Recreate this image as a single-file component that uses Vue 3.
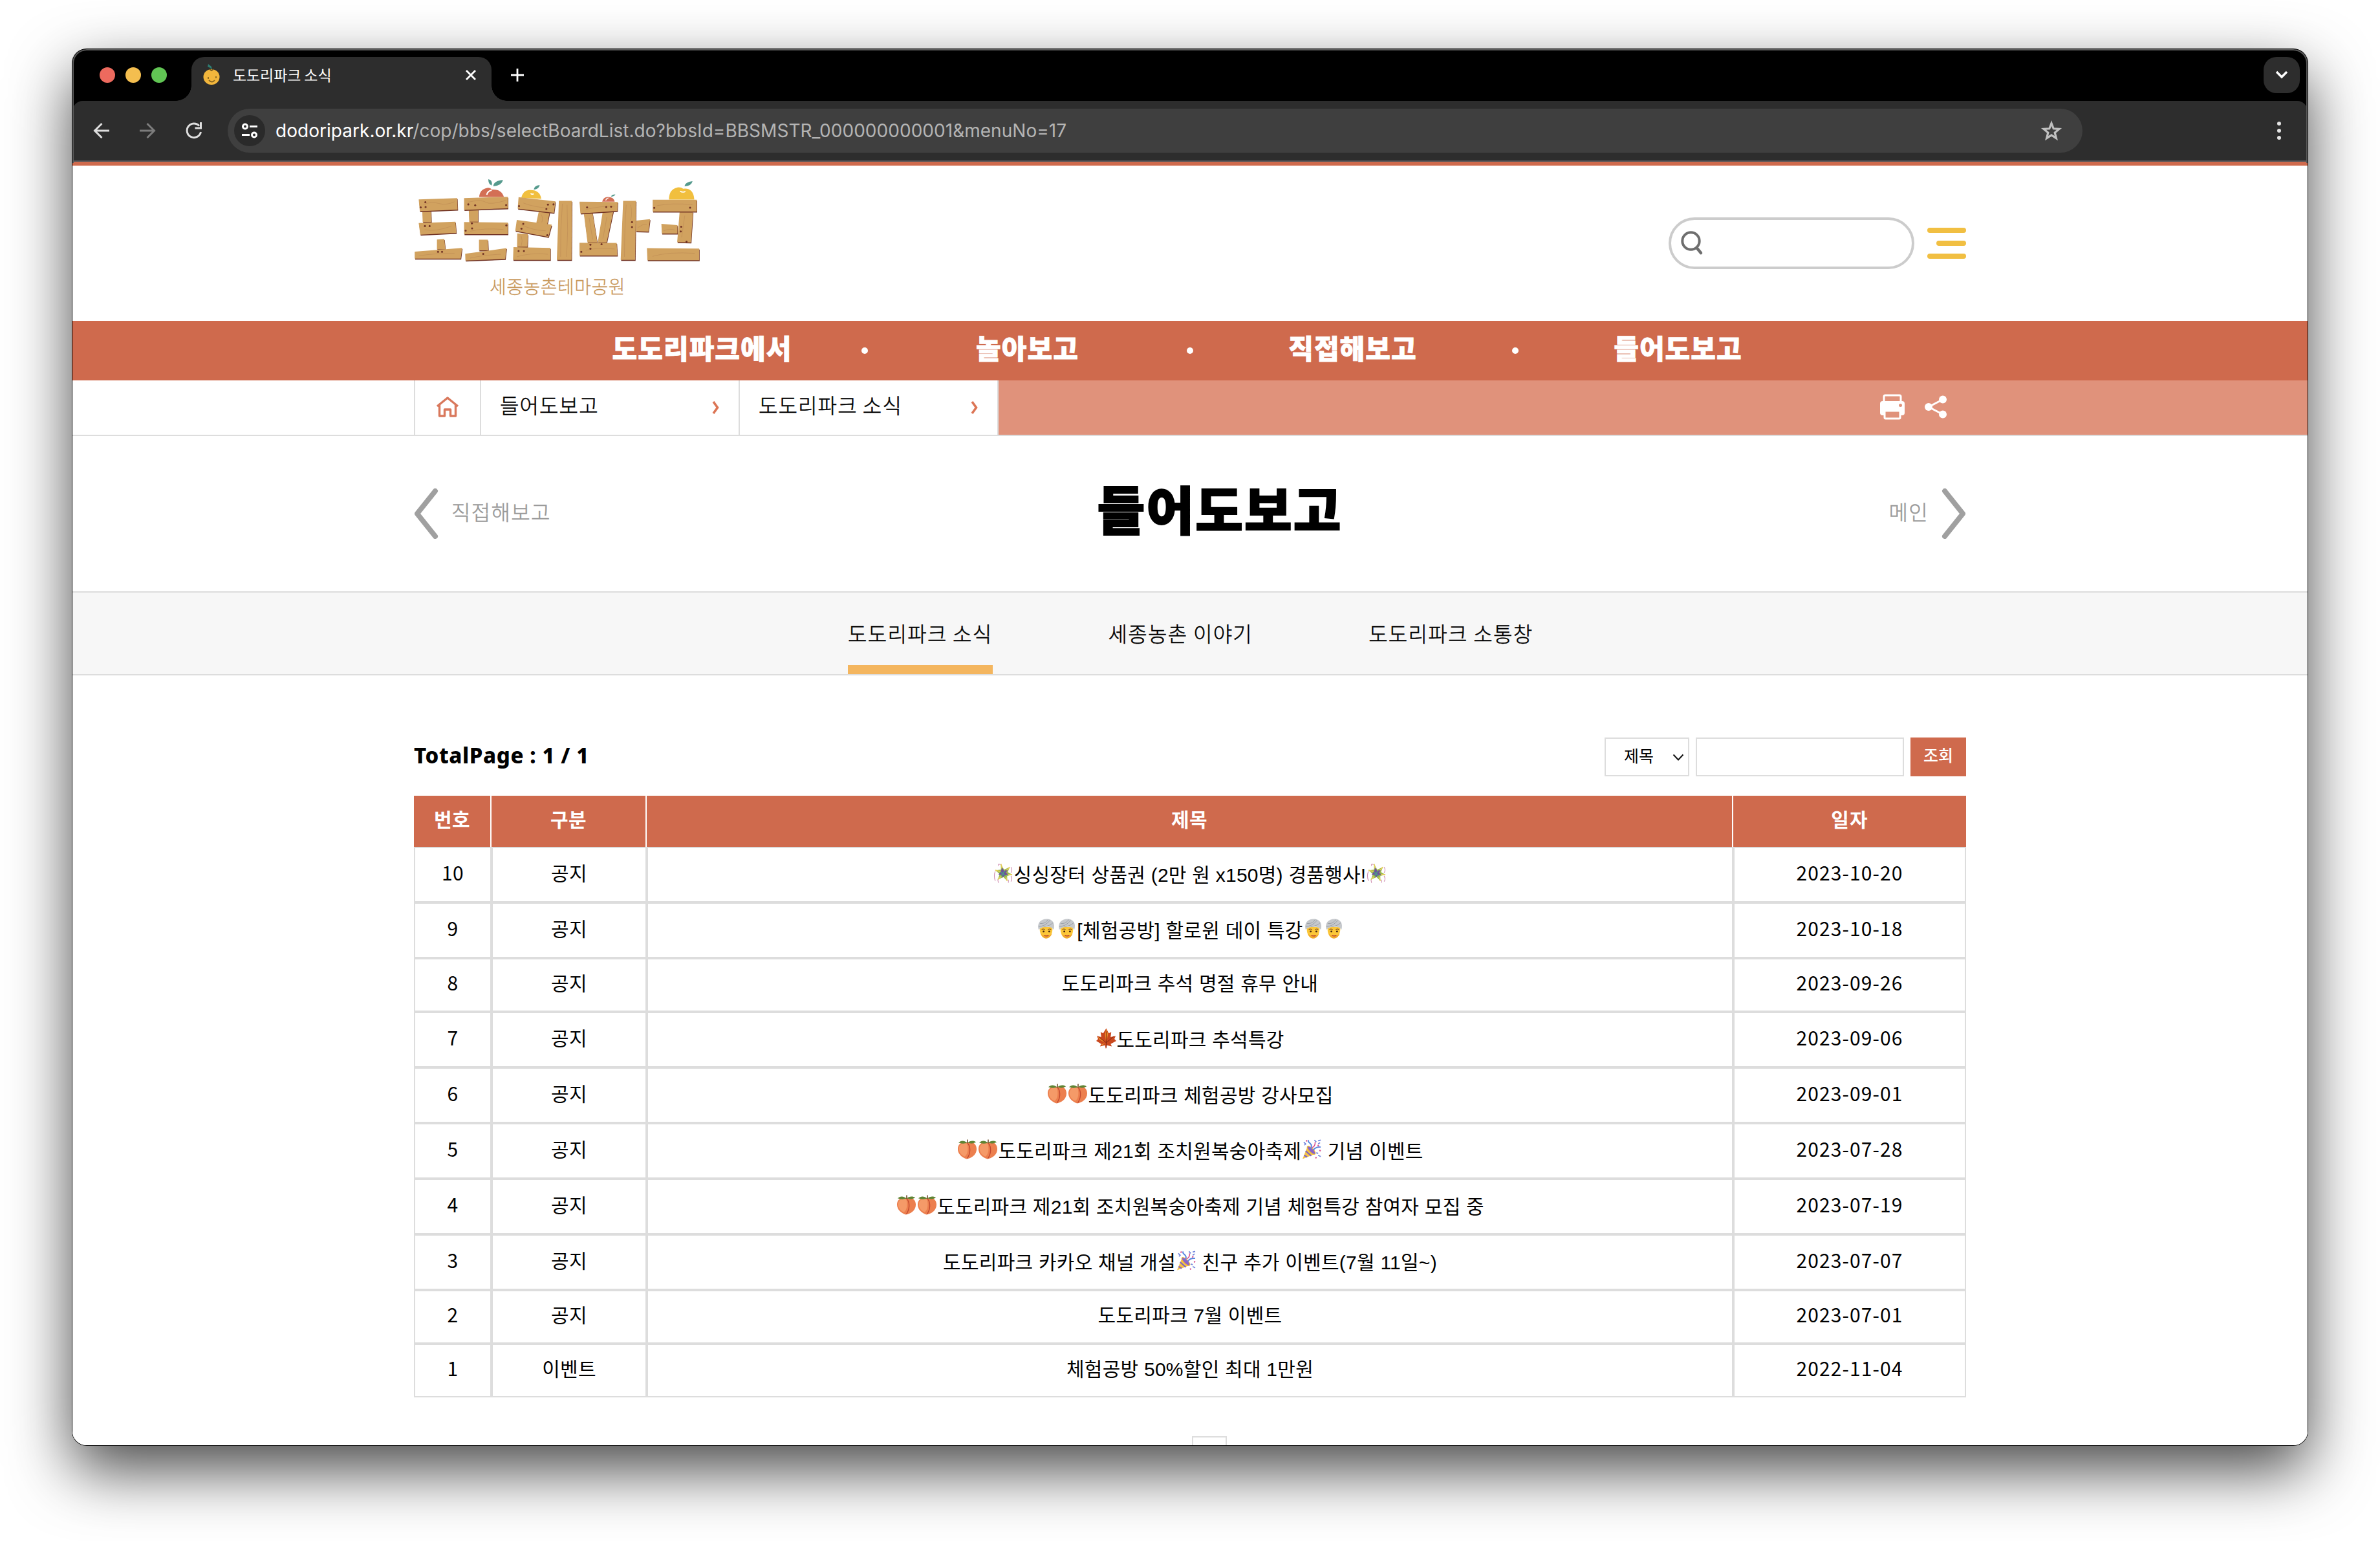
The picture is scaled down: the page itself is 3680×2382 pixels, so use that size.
<script setup>
const navItems = ['도도리파크에서', '놀아보고', '직접해보고', '들어도보고']
const crumbs = ['들어도보고', '도도리파크 소식']
const subTabs = ['도도리파크 소식', '세종농촌 이야기', '도도리파크 소통창']

const rows = [
  { no: 10, kind: '공지', title: ':pinata:싱싱장터 상품권 (2만 원 x150명) 경품행사!:pinata:', date: '2023-10-20' },
  { no: 9, kind: '공지', title: ':turban::turban:[체험공방] 할로윈 데이 특강:turban::turban:', date: '2023-10-18' },
  { no: 8, kind: '공지', title: '도도리파크 추석 명절 휴무 안내', date: '2023-09-26' },
  { no: 7, kind: '공지', title: ':maple:도도리파크 추석특강', date: '2023-09-06' },
  { no: 6, kind: '공지', title: ':peach::peach:도도리파크 체험공방 강사모집', date: '2023-09-01' },
  { no: 5, kind: '공지', title: ':peach::peach:도도리파크 제21회 조치원복숭아축제:popper: 기념 이벤트', date: '2023-07-28' },
  { no: 4, kind: '공지', title: ':peach::peach:도도리파크 제21회 조치원복숭아축제 기념 체험특강 참여자 모집 중', date: '2023-07-19' },
  { no: 3, kind: '공지', title: '도도리파크 카카오 채널 개설:popper: 친구 추가 이벤트(7월 11일~)', date: '2023-07-07' },
  { no: 2, kind: '공지', title: '도도리파크 7월 이벤트', date: '2023-07-01' },
  { no: 1, kind: '이벤트', title: '체험공방 50%할인 최대 1만원', date: '2022-11-04' },
].map((r) => {
  const parts = r.title
    .split(/(:[a-z]+:)/)
    .filter(Boolean)
    .map((t) => (/^:[a-z]+:$/.test(t) ? { icon: t.slice(1, -1) } : { text: t }))
  return { ...r, parts, tall: parts.some((p) => p.icon) }
})

// Wooden planks of the logo lettering
const planks = [
  '155,255 194,255 196,310 157,310',
  '139,205 312,199 314,252 144,260',
  '139,314 304,308 308,360 146,368',
  '221,390 254,388 259,436 221,436',
  '121,446 334,429 328,478 121,478',
  '364,250 406,250 406,308 366,308',
  '343,199 540,193 540,246 343,254',
  '343,310 540,312 540,366 343,366',
  '410,391 450,391 452,440 410,440',
  '348,456 534,430 528,480 349,487',
  '680,255 728,262 716,325 668,312',
  '588,195 754,214 747,267 584,248',
  '580,300 737,322 722,378 573,350',
  '582,362 630,366 628,424 581,424',
  '565,425 731,429 731,484 563,484',
  '769,212 828,212 826,484 760,484',
  '881,268 920,266 942,404 898,404',
  '966,264 1014,260 984,404 944,404',
  '862,216 1034,217 1032,258 866,270',
  '862,405 1029,406 1032,464 862,464',
  '1058,212 1116,212 1112,484 1047,484',
  '1116,303 1179,296 1172,354 1116,352',
  '1312,262 1372,262 1363,404 1301,402',
  '1191,207 1389,207 1389,261 1191,261',
  '1230,318 1302,324 1302,363 1232,363',
  '1165,430 1400,432 1400,486 1167,486',
]
const nails = [
  [169, 218], [148, 242], [170, 240], [167, 328], [188, 328], [226, 447], [244, 447],
  [362, 228], [393, 232], [532, 231], [378, 316], [379, 339], [350, 349], [533, 325], [429, 457],
  [590, 236], [720, 229], [745, 228], [713, 249], [609, 318], [601, 340], [717, 370], [588, 443], [612, 443],
  [896, 242], [982, 240], [1004, 239], [911, 414], [911, 433], [961, 412], [870, 447],
  [1098, 310], [1098, 333], [1198, 244], [1359, 243], [1319, 331], [1317, 353], [1343, 400],
]
const grains = [
  'M160 228q40-14 70-4t70-8', 'M165 345q50 10 120-16', 'M140 466q60-12 160-12',
  'M360 218q60-14 80 0t90-8', 'M370 352q60-16 150-8', 'M370 476q60-14 140-18',
  'M610 222q50 20 120 24', 'M600 322q50 26 110 28', 'M580 470q60-20 140-12',
  'M785 225q-10 120-8 245', 'M806 230q6 120-2 240', 'M890 252q60-16 130-16', 'M890 440q50-14 130-6',
  'M1072 230q-8 110-8 240', 'M1092 230q8 40 0 70', 'M905 290q10 60 16 100', 'M985 285q-10 60-18 100',
  'M1210 234q70-14 160-4', 'M1335 280q-8 60-14 100', 'M1190 468q70-22 190-14', 'M1125 335q20-16 40-16',
  'M690 275q10 20 2 36', 'M600 375q8 20 0 44', 'M1240 350q30-12 50-4',
]
</script>

<template>
  <svg class="defs" width="0" height="0" aria-hidden="true">
    <symbol id="peach" viewBox="0 0 32 32">
      <path d="M17 5C9 2 1 6 1 15c0 9 8 14 14 16 7-1 16-6 16-16C31 6 23 2 17 5z" fill="#ec7f4e" />
      <path d="M3 13C4 6 12 4 16 7c2 8 1 17-4 20-6-2-10-8-9-14z" fill="#f59a68" />
      <path d="M17 6c5 6 4 17-1 24" fill="none" stroke="#c2492f" stroke-width="1.4" />
      <path d="M16 5C11 1 6 1 2 5c5 2 10 2 14 0zM17 5c3-3 9-4 13-1-4 2-9 3-13 1z" fill="#5f8434" />
      <path d="M16.500 6V0" stroke="#6b4a26" stroke-width="1.600" />
    </symbol>
    <symbol id="turban" viewBox="0 0 32 32">
      <path d="M6 13c-1 10 3 18 10 18s11-8 10-18z" fill="#fbc638" />
      <path d="M8 24c2 5 5 7 8 7s7-2 9-7c-4 3-12 4-17 0z" fill="#f0a62c" />
      <path d="M4 17C1 7 7 0 17 0s14 8 11 17C24 11 11 11 4 17z" fill="#c5c8cc" />
      <path d="M4 12c7 0 14-4 18-10M6 7c5 1 10-1 13-6M12 12c7 0 12-3 15-6" fill="none" stroke="#989da3" stroke-width="1" />
      <path d="M9 17q2-2 5 0M19 17q3-2 5 0" fill="none" stroke="#7d4b18" stroke-width="1.200" />
      <circle cx="12" cy="20" r="1.500" fill="#432510" />
      <circle cx="21" cy="20" r="1.500" fill="#432510" />
      <path d="M13 26q4 2 7 0" fill="none" stroke="#c04a32" stroke-width="1.800" />
    </symbol>
    <symbol id="maple" viewBox="0 0 32 32">
      <path d="M16 0l4 8 4-2-1 8 8-2-2 5 3 3-9 5 2 4-8-2-1 5h-1l-1-5-8 2 2-4-8-5 3-3-2-5 7 2-1-8 4 2z" fill="#c9481e" />
      <path d="M16 1l3 8-3 14-2-13zM2 13l6 4 6 6-9-5zM8 26l6-3-4 4z" fill="#ea8a2a" />
      <path d="M16 5v26M16 23l12-10M16 23L4 14" stroke="#7c2410" stroke-width=".9" fill="none" />
    </symbol>
    <symbol id="popper" viewBox="0 0 32 32">
      <path d="M1 31L9 11l12 12z" fill="#f5c445" />
      <path d="M3.500 25l5 3M6 18l9 8" stroke="#7e62c4" stroke-width="2.200" />
      <ellipse cx="15" cy="17" rx="3.200" ry="8.600" transform="rotate(-45 15 17)" fill="#8a63c9" stroke="#f0b938" stroke-width="1.200" />
      <path d="M14 15q3-6-1-9t-2-5M18 17q4-6 12-5" fill="none" stroke="#5a86df" stroke-width="2" />
      <path d="M16 13q6-3 5-9" fill="none" stroke="#d8508e" stroke-width="1.600" />
      <path d="M3 4l3 3-2 2M20 1l3 3M26 2l4-1M26 7l3-2M26 25l4 2M23 21l3 1" fill="none" stroke="#7286dc" stroke-width="1.800" />
      <path d="M7 1l1 2M28 17l2 1M22 28l1 2M25 9l2 1" stroke="#d8508e" stroke-width="2.200" />
    </symbol>
    <symbol id="pinata" viewBox="0 0 32 32">
      <path d="M12 1l5 9 9-4-3 8 7 4-8 2 0 8-6-6-9 4 3-9-7-6 9-1z" fill="#9bbb4e" />
      <path d="M14 6l3 6 6-2-3 5 4 3-6 1-3 4-2-5-5 0 4-5z" fill="#6f5299" />
      <path d="M12 1l2 7M26 6l-5 5M3 11l8 2M30 18l-7 0M22 28l-2-6M7 26l5-5" stroke="#e4cf59" stroke-width="1.800" />
      <path d="M3 13q-3 6 0 15M28 20q3 5 0 9M11 2q-4-2-3 2M28 6q3 5 0 9M7 26l1 5M24 26l0 5" fill="none" stroke="#cf8db0" stroke-width="1.100" />
      <path d="M12 14l7 6M18 12l-5 8" stroke="#4a9c86" stroke-width="1.600" />
    </symbol>
  </svg>

  <div class="window">
    <header class="tabstrip">
      <div class="lights"><i class="red"></i><i class="amber"></i><i class="green"></i></div>
      <div class="tab">
        <svg class="favicon" width="26" height="34" viewBox="0 0 26 34">
          <path d="M8 1l5 4 1 5-3-3-4-2z" fill="#2d7d72" />
          <ellipse cx="13" cy="21" rx="12.5" ry="12" fill="#f2b63c" />
          <path d="M10 9l3 2 3-2" fill="none" stroke="#7a5a1c" stroke-width="2" />
          <path d="M8 21v3M20 20v3M9 26q5 5 9 0" fill="none" stroke="#8a661f" stroke-width="1.8" />
        </svg>
        <span class="tab-title">도도리파크 소식</span>
        <svg width="18" height="18" viewBox="0 0 18 18"><path d="M2 2l14 14M16 2L2 16" stroke="#fff" stroke-width="2.8" /></svg>
      </div>
      <svg class="plus" width="20" height="20" viewBox="0 0 20 20"><path d="M10 0v20M0 10h20" stroke="#fff" stroke-width="2.8" /></svg>
      <div class="tab-menu">
        <svg width="20" height="14" viewBox="0 0 20 14"><path d="M2 2l8 8 8-8" fill="none" stroke="#fff" stroke-width="3.4" /></svg>
      </div>
    </header>

    <div class="toolbar">
      <svg class="back" width="26" height="26" viewBox="0 0 26 26"><path d="M25 13H3M13.500 2L2.500 13l11 11" fill="none" stroke="#dedede" stroke-width="3" /></svg>
      <svg class="fwd" width="26" height="26" viewBox="0 0 26 26"><path d="M1 13h22M12.500 2l11 11-11 11" fill="none" stroke="#7c7c7c" stroke-width="3" /></svg>
      <svg class="reload" width="28" height="28" viewBox="0 0 28 28">
        <path d="M24.500 16A10.800 10.800 0 1 1 22 6.600" fill="none" stroke="#dedede" stroke-width="3" />
        <path d="M26 1v10.500H15.500v-3H23V1z" fill="#dedede" />
      </svg>
      <div class="omnibox">
        <div class="site-info">
          <svg width="26" height="24" viewBox="0 0 26 24" fill="none" stroke="#fff" stroke-width="3">
            <circle cx="6" cy="5.500" r="3.500" /><path d="M13 5.500h12M1 18.500h12" /><circle cx="20" cy="18.500" r="3.500" />
          </svg>
        </div>
        <span class="url"><b>dodoripark.or.kr</b>/cop/bbs/selectBoardList.do?bbsId=BBSMSTR_000000000001&amp;menuNo=17</span>
        <svg class="star" width="34" height="32" viewBox="0 0 34 32"><path d="M17 4.500l3.200 8.300 8.800.6-6.800 5.600 2.200 8.700-7.400-4.800-7.400 4.800 2.200-8.700L5 13.400l8.800-.6z" fill="none" stroke="#c0c0c0" stroke-width="3.200" /></svg>
      </div>
      <div class="kebab"><i></i><i></i><i></i></div>
    </div>

    <main class="page">
      <div class="masthead">
        <div class="brand">
          <svg class="logo" width="454" height="134" viewBox="100 100 1320 400" preserveAspectRatio="none">
            <g fill="#d36f55"><path d="M411 194q2-36 36-42 14-2 20 8 44-4 55 34z" /><path d="M964 216q4-20 22-22 30-2 34 22z" /></g>
            <path d="M445 184q4-18 22-21" fill="none" stroke="#fff" stroke-width="6" />
            <path d="M980 210q2-10 12-11" fill="none" stroke="#fff" stroke-width="4" />
            <g fill="#f1bf3e"><path d="M600 198q8-34 34-36 50-4 56 40z" /><path d="M1264 206q0-48 38-56 16-2 26 6 46-6 50 50z" /></g>
            <path d="M642 178q6 6 14 1M1314 167q12 8 24 2" fill="none" stroke="#fff" stroke-width="5" />
            <g fill="#559a8d">
              <path d="M474 145q2-26 44-29-6 26-44 29z" /><path d="M452 112q22 6 15 29-16-6-15-29z" />
              <path d="M656 160q2-18 27-21-4 20-27 21z" /><path d="M1003 192q4-10 20-10-4 10-20 10z" />
              <path d="M1334 145q2-20 36-24-4 22-36 24z" />
            </g>
            <g v-for="(p, i) in planks" :key="i">
              <polygon :points="p" fill="#713325" transform="translate(2 4.500)" />
              <polygon :points="p" fill="#d1a25f" />
            </g>
            <path :d="grains.join('')" fill="none" stroke="#bd8a54" stroke-width="1.800" />
            <g fill="#713325"><circle v-for="(n, i) in nails" :key="i" :cx="n[0]" :cy="n[1]" r="4.500" /></g>
          </svg>
          <p class="tagline">세종농촌테마공원</p>
        </div>
        <div class="tools">
          <div class="search">
            <svg width="36" height="38" viewBox="0 0 36 38" fill="none" stroke="#6e6e6e"><circle cx="15.500" cy="15.500" r="13.200" stroke-width="4" /><path d="M24.500 26l6.500 8" stroke-width="4.500" stroke-linecap="round" /></svg>
          </div>
          <div class="burger"><i></i><i></i><i></i></div>
        </div>
      </div>

      <nav class="gnb"><span v-for="n in navItems" :key="n">{{ n }}</span></nav>

      <div class="crumb-bar">
        <div class="crumb-left"></div>
        <div class="crumb-home">
          <svg width="36" height="32" viewBox="0 0 36 32" fill="none" stroke="#d9785c" stroke-width="3.400" stroke-linejoin="round"><path d="M2 15L18 2l16 13M5.500 13v17h8V20h9v10h8V13" /></svg>
        </div>
        <div v-for="c in crumbs" :key="c" class="crumb">
          <span>{{ c }}</span>
          <svg width="12" height="20" viewBox="0 0 12 20"><path d="M2 1l6.500 9L2 19" fill="none" stroke="#dc7555" stroke-width="3.600" /></svg>
        </div>
        <div class="crumb-rest">
          <svg width="40" height="40" viewBox="0 0 40 40">
            <rect x="7" y="2" width="26" height="16" rx="2" fill="none" stroke="#fff" stroke-width="3" />
            <path d="M5 11h30q4 0 4 4v14q0 4-4 4H5q-4 0-4-4V15q0-4 4-4z" fill="#fff" />
            <rect x="8" y="26" width="24" height="12" rx="1.500" fill="#e0927b" stroke="#fff" stroke-width="3" />
            <circle cx="32.500" cy="17.500" r="2.500" fill="#e0927b" />
          </svg>
          <svg width="36" height="36" viewBox="0 0 36 36" fill="#fff"><path d="M29 6.500L7 18l22 11.500" fill="none" stroke="#fff" stroke-width="3" /><circle cx="29" cy="6.500" r="6" /><circle cx="7" cy="18" r="6" /><circle cx="29" cy="29.500" r="6" /></svg>
        </div>
      </div>

      <section class="heading">
        <a class="side prev"><svg width="38" height="78" viewBox="0 0 38 78"><path d="M33 4L5 39l28 35" /></svg><span>직접해보고</span></a>
        <h1>들어도보고</h1>
        <a class="side next"><span>메인</span><svg width="38" height="78" viewBox="0 0 38 78"><path d="M5 4l28 35L5 74" /></svg></a>
      </section>

      <div class="subnav"><a v-for="(t, i) in subTabs" :key="t" :class="{ on: i === 0 }">{{ t }}</a></div>

      <section class="board">
        <div class="board-top">
          <strong>TotalPage : 1 / 1</strong>
          <div class="filter">
            <div class="select"><span>제목</span><svg width="18" height="12" viewBox="0 0 18 12"><path d="M1.500 1.500L9 9.500l7.500-8" fill="none" stroke="#111" stroke-width="2" /></svg></div>
            <div class="field"></div>
            <div class="go">조회</div>
          </div>
        </div>
        <div class="table">
          <div class="tr th"><div>번호</div><div>구분</div><div>제목</div><div>일자</div></div>
          <div v-for="r in rows" :key="r.no" class="tr" :class="{ tall: r.tall }">
            <div>{{ r.no }}</div>
            <div>{{ r.kind }}</div>
            <div class="subject">
              <template v-for="(p, i) in r.parts" :key="i"><svg v-if="p.icon" class="emoji" width="31" height="32"><use :href="'#' + p.icon" /></svg><span v-else>{{ p.text }}</span></template>
            </div>
            <div>{{ r.date }}</div>
          </div>
        </div>
        <div class="pager"><i></i></div>
      </section>
    </main>
  </div>
</template>

<style>
body {
  background: #fff;
}
#app {
  width: 3680px;
  height: 2382px;
  overflow: hidden;
  display: flex;
  justify-content: center;
  align-items: flex-start;
}
</style>

<style scoped>
* {
  box-sizing: border-box;
}
svg {
  display: block;
  flex: none;
}
.defs {
  position: absolute;
}
.window {
  position: relative;
  width: 3456px;
  height: 2158px;
  margin-top: 76px;
  border-radius: 22px;
  overflow: hidden;
  background: linear-gradient(#000 0 120px, #fff 120px);
  font-family: 'Noto Sans CJK KR', 'Noto Sans', sans-serif;
  color: #000;
  display: flex;
  flex-direction: column;
  box-shadow: 0 0 0 1px #000, 0 38px 96px rgba(0, 0, 0, 0.72);
}
.window::after {
  content: '';
  position: absolute;
  inset: 0 0 auto;
  height: 174px;
  border-radius: 22px 22px 0 0;
  border: solid #5c5c5c;
  border-width: 2px 2px 0;
}

/* browser chrome */
.tabstrip {
  height: 80px;
  flex: none;
  background: #000;
  display: flex;
  align-items: center;
}
.lights {
  display: flex;
  gap: 16px;
  margin-left: 42px;
  width: 142px;
}
.lights i {
  width: 24px;
  height: 24px;
  border-radius: 50%;
}
.red { background: #ed6a5e; }
.amber { background: #f4be4f; }
.green { background: #61c554; }
.tab {
  position: relative;
  width: 464px;
  height: 68px;
  align-self: flex-end;
  background: #2d2d2d;
  border-radius: 20px 20px 0 0;
  display: flex;
  align-items: center;
  padding: 0 23px 12px 18px;
}
.tab::before,
.tab::after {
  content: '';
  position: absolute;
  bottom: 0;
  width: 24px;
  height: 24px;
}
.tab::before {
  right: 100%;
  background: radial-gradient(circle at 0 0, transparent 23.5px, #2d2d2d 24px);
}
.tab::after {
  left: 100%;
  background: radial-gradient(circle at 100% 0, transparent 23.5px, #2d2d2d 24px);
}
.tab-title {
  flex: 1;
  margin: -3px 0 0 20px;
  font-size: 23px;
  line-height: 30px;
  letter-spacing: -0.1px;
  color: #fff;
}
.favicon {
  margin-top: -2px;
}
.plus {
  margin-left: 30px;
}
.tab-menu {
  width: 56px;
  height: 56px;
  border-radius: 20px;
  background: #2d2d2d;
  margin-left: auto;
  margin-right: 12px;
  display: grid;
  place-items: center;
}
.toolbar {
  height: 94px;
  flex: none;
  background: #2d2d2d;
  border-bottom: 2px solid #55565a;
  border-radius: 16px 16px 0 0;
  display: flex;
  align-items: center;
}
.back { margin-left: 32px; }
.fwd { margin-left: 45px; }
.reload { margin-left: 45px; }
.omnibox {
  margin-left: 38px;
  width: 2868px;
  height: 68px;
  border-radius: 34px;
  background: #3f3f3f;
  display: flex;
  align-items: center;
  padding: 0 31px 0 10px;
}
.site-info {
  width: 48px;
  height: 48px;
  border-radius: 50%;
  background: #2a2a2a;
  display: grid;
  place-items: center;
}
.url {
  flex: 1;
  margin-left: 16px;
  font-family: Inter, sans-serif;
  font-size: 28px;
  line-height: 40px;
  letter-spacing: 0.03px;
  color: #b4b4b4;
  white-space: nowrap;
}
.url b {
  font-weight: 400;
  color: #fff;
}
.kebab {
  margin-left: auto;
  margin-right: 41px;
  display: grid;
  gap: 5px;
}
.kebab i {
  width: 6px;
  height: 6px;
  border-radius: 50%;
  background: #e3e3e3;
}

/* site header */
.page {
  flex: 1;
  background: #fff;
  border-top: 6px solid #cf6a4d;
}
.masthead {
  height: 240px;
  padding: 0 528px;
  display: flex;
  justify-content: space-between;
}
.brand {
  width: 444px;
}
.logo {
  margin: 17px 0 0 -6px;
}
.tagline {
  margin: 19px 0 0;
  font-size: 28px;
  line-height: 32px;
  letter-spacing: 0.5px;
  font-weight: 300;
  text-align: center;
  color: #c8975a;
  -webkit-text-stroke: 0.3px #c8975a;
}
.tools {
  display: flex;
  align-items: center;
  align-self: flex-start;
  margin-top: 80px;
  gap: 20px;
}
.search {
  width: 380px;
  height: 80px;
  border: 4px solid #ccc;
  border-radius: 40px;
  padding: 17px 15px;
}
.burger {
  width: 60px;
  display: flex;
  flex-direction: column;
  align-items: flex-end;
  gap: 12px;
}
.burger i {
  width: 60px;
  height: 8px;
  border-radius: 4px;
  background: #f1bf42;
}
.burger i:nth-child(2) {
  width: 46px;
}
.gnb {
  height: 92px;
  background: #cf6a4d;
  padding-left: 722px;
  display: flex;
}
.gnb span {
  position: relative;
  width: 503px;
  text-align: center;
  font-size: 42px;
  font-weight: 900;
  line-height: 82px;
  letter-spacing: 1.1px;
  color: #fff;
  -webkit-text-stroke: 0.8px #fff;
}
.gnb span:not(:last-child)::after {
  content: '';
  position: absolute;
  right: -5px;
  top: 41px;
  width: 10px;
  height: 10px;
  border-radius: 50%;
  background: #fff;
}

.crumb-bar {
  height: 86px;
  border-bottom: 2px solid #ddd;
  display: flex;
}
.crumb-left {
  width: 528px;
}
.crumb-home {
  width: 102px;
  border-left: 2px solid #ddd;
  display: grid;
  place-items: center;
  padding-bottom: 2px;
}
.crumb {
  width: 400px;
  border-left: 2px solid #ddd;
  display: flex;
  justify-content: space-between;
  align-items: center;
  padding: 0 29px 1px 29px;
}
.crumb span {
  font-size: 32px;
  font-weight: 300;
  line-height: 40px;
  letter-spacing: 1.1px;
  margin-bottom: 9px;
  -webkit-text-stroke: 0.5px #000;
}
.crumb-rest {
  flex: 1;
  border-left: 2px solid #ddd;
  background: #e0927b;
  display: flex;
  align-items: center;
  justify-content: flex-end;
  gap: 29px;
  padding: 0 557px 2px 0;
}

.heading {
  height: 240px;
  padding: 0 528px;
  display: flex;
  justify-content: space-between;
  align-items: center;
}
.heading h1 {
  margin: 0 0 20px;
  font-size: 80px;
  font-weight: 900;
  line-height: 100px;
  letter-spacing: 2.2px;
  -webkit-text-stroke: 2px #000;
}
.side {
  display: flex;
  align-items: center;
  gap: 20px;
  color: #999;
  font-size: 32px;
  font-weight: 300;
  line-height: 40px;
  letter-spacing: 1.3px;
  margin-bottom: 1px;
  -webkit-text-stroke: 0.5px #999;
}
.side span {
  margin-bottom: 8px;
}
.side path {
  fill: none;
  stroke: #a0a0a0;
  stroke-width: 8;
  stroke-linecap: round;
  stroke-linejoin: round;
}
.subnav {
  height: 130px;
  background: #f7f7f7;
  border: solid #ddd;
  border-width: 2px 0;
  padding-left: 1199px;
  display: flex;
  gap: 179px;
}
.subnav a {
  font-size: 32px;
  font-weight: 300;
  line-height: 124px;
  letter-spacing: 1.3px;
  height: 126px;
  white-space: nowrap;
  -webkit-text-stroke: 0.5px #000;
}
.subnav .on {
  border-bottom: 14px solid #f4b65f;
}

/* board */
.board {
  padding: 96px 528px 0;
}
.board-top {
  height: 60px;
  display: flex;
  justify-content: space-between;
  align-items: center;
}
.board-top strong {
  font-family: 'Noto Sans', sans-serif;
  font-size: 33px;
  font-weight: 800;
  line-height: 40px;
  letter-spacing: 0.6px;
  margin-bottom: 5px;
}
.filter {
  display: flex;
  height: 60px;
  gap: 10px;
  font-size: 25px;
  line-height: 50px;
}
.select {
  width: 131px;
  border: 2px solid #ddd;
  display: flex;
  justify-content: space-between;
  padding: 0 6px 0 28px;
}
.select svg {
  margin-top: 23px;
}
.field {
  width: 322px;
  border: 2px solid #ddd;
}
.go {
  width: 86px;
  background: #cf6a4d;
  color: #fff;
  font-weight: 500;
  text-align: center;
  line-height: 52px;
}
.table {
  margin-top: 30px;
}
.tr {
  display: grid;
  grid-template-columns: 120px 240px 1680px 360px;
  height: 83px;
  font-size: 30px;
}
.tr > div {
  border: 2px solid #ddd;
  display: flex;
  align-items: center;
  justify-content: center;
  padding-bottom: 10px;
  letter-spacing: 0.3px;
}
.tr > div:last-child {
  letter-spacing: 1.1px;
}
.tr > .subject {
  font-family: 'Liberation Sans', 'Noto Sans CJK KR', sans-serif;
  padding-bottom: 9px;
  letter-spacing: 0.25px;
  white-space: pre;
}
.tr.tall {
  height: 86px;
}
.tr.tall > div {
  padding-bottom: 8px;
}
.tr.tall > .subject {
  padding-bottom: 5px;
}
.emoji {
  margin: 0 0.5px;
}
.tr.th {
  height: 79px;
  font-weight: 700;
  color: #fff;
}
.tr.th > div {
  background: #cf6a4d;
  border: 0;
  padding-bottom: 9px;
}
.tr.th > div:not(:last-child) {
  border-right: 2px solid #fff;
}
.pager {
  margin-top: 60px;
  display: flex;
  justify-content: center;
}
.pager i {
  width: 54px;
  height: 60px;
  margin-left: 60px;
  border: 2px solid #ddd;
}
</style>
